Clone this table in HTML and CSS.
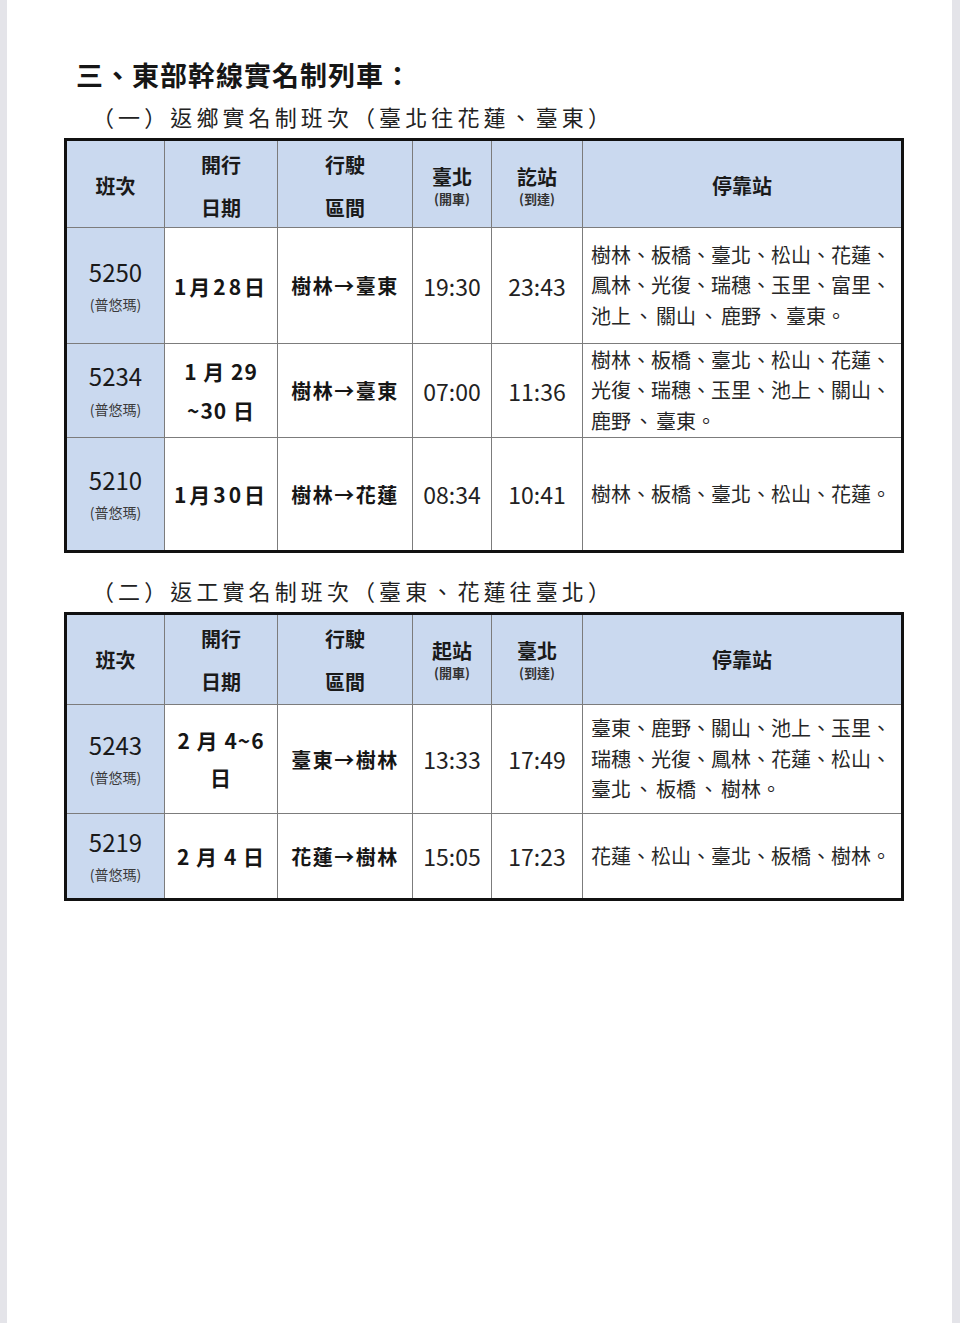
FILE: index.html
```html
<!DOCTYPE html>
<html lang="zh-Hant">
<head>
<meta charset="utf-8">
<title>東部幹線實名制列車</title>
<link rel="stylesheet" href="styles.css">
</head>
<body>
<div class="sheet">
  <h1 class="title">三、東部幹線實名制列車：</h1>

  <h2 class="subtitle">（一）返鄉實名制班次（臺北往花蓮、臺東）</h2>
  <div class="grid grid-a">
    <div class="cell head"><span class="hb">班次</span></div>
    <div class="cell head two"><span class="hb">開行</span><span class="hb">日期</span></div>
    <div class="cell head two"><span class="hb">行駛</span><span class="hb">區間</span></div>
    <div class="cell head stack"><span class="hb">臺北</span><span class="hs">(開車)</span></div>
    <div class="cell head stack"><span class="hb">訖站</span><span class="hs">(到達)</span></div>
    <div class="cell head last"><span class="hb">停靠站</span></div>

    <div class="cell train"><span class="no">5250</span><span class="kind">(普悠瑪)</span></div>
    <div class="cell date">1月28日</div>
    <div class="cell route">樹林→臺東</div>
    <div class="cell time">19:30</div>
    <div class="cell time">23:43</div>
    <div class="cell stops last"><p class="list">樹林、板橋、臺北、松山、花蓮、<br>鳳林、光復、瑞穗、玉里、富里、<br>池上<span class="ws">、</span>關山<span class="ws">、</span>鹿野<span class="ws">、</span>臺東。</p></div>

    <div class="cell train r2"><span class="no">5234</span><span class="kind">(普悠瑪)</span></div>
    <div class="cell date two-line">1 月 29<br>~30 日</div>
    <div class="cell route">樹林→臺東</div>
    <div class="cell time">07:00</div>
    <div class="cell time">11:36</div>
    <div class="cell stops last"><p class="list">樹林、板橋、臺北、松山、花蓮、<br>光復、瑞穗、玉里、池上、關山、<br>鹿野<span class="ws">、</span>臺東。</p></div>

    <div class="cell train bottom"><span class="no">5210</span><span class="kind">(普悠瑪)</span></div>
    <div class="cell date bottom">1月30日</div>
    <div class="cell route bottom">樹林→花蓮</div>
    <div class="cell time bottom">08:34</div>
    <div class="cell time bottom">10:41</div>
    <div class="cell stops last bottom"><p class="list">樹林、板橋、臺北、松山、花蓮。</p></div>
  </div>

  <h2 class="subtitle second">（二）返工實名制班次（臺東、花蓮往臺北）</h2>
  <div class="grid grid-b">
    <div class="cell head"><span class="hb">班次</span></div>
    <div class="cell head two"><span class="hb">開行</span><span class="hb">日期</span></div>
    <div class="cell head two"><span class="hb">行駛</span><span class="hb">區間</span></div>
    <div class="cell head stack"><span class="hb">起站</span><span class="hs">(開車)</span></div>
    <div class="cell head stack"><span class="hb">臺北</span><span class="hs">(到達)</span></div>
    <div class="cell head last"><span class="hb">停靠站</span></div>

    <div class="cell train"><span class="no">5243</span><span class="kind">(普悠瑪)</span></div>
    <div class="cell date two-line tight">2 月 4~6<br>日</div>
    <div class="cell route">臺東→樹林</div>
    <div class="cell time">13:33</div>
    <div class="cell time">17:49</div>
    <div class="cell stops last"><p class="list">臺東、鹿野、關山、池上、玉里、<br>瑞穗、光復、鳳林、花蓮、松山、<br>臺北<span class="ws">、</span>板橋<span class="ws">、</span>樹林。</p></div>

    <div class="cell train bottom"><span class="no">5219</span><span class="kind">(普悠瑪)</span></div>
    <div class="cell date bottom spaced">2 月 4 日</div>
    <div class="cell route bottom">花蓮→樹林</div>
    <div class="cell time bottom">15:05</div>
    <div class="cell time bottom">17:23</div>
    <div class="cell stops last bottom"><p class="list">花蓮、松山、臺北、板橋、樹林。</p></div>
  </div>
</div>
</body>
</html>
```
FILE: styles.css
```css
* { box-sizing: border-box; }
html, body { margin: 0; padding: 0; background: #ffffff; }
body {
  font-family: "Noto Sans CJK TC", "Noto Sans", sans-serif;
  color: #1c1c1c;
}
.sheet {
  width: 960px;
  min-height: 1323px;
  background: #ffffff;
  border-left: 7px solid #e4e4e9;
  border-right: 8px solid #e4e4e9;
  padding-top: 57px;
}
.title {
  margin: 0 0 0 69px;
  font-size: 27px;
  line-height: 36px;
  font-weight: 700;
  letter-spacing: 1px;
  color: #161616;
}
.subtitle {
  margin: 7px 0 0 85px;
  font-size: 22px;
  line-height: 32px;
  font-weight: 400;
  letter-spacing: 4.1px;
  color: #222;
}
.subtitle.second { margin-top: 21px; }
.grid {
  display: grid;
  width: 840px;
  margin: 6px 0 0 57px;
  border: 3px solid #111;
  grid-template-columns: 98px 113px 135px 79px 91px 318px;
}
.grid-a { grid-template-rows: 87px 116px 94px 112px; }
.grid-b { grid-template-rows: 90px 109px 84px; }
.cell {
  display: flex;
  flex-direction: column;
  align-items: center;
  justify-content: center;
  border-right: 1px solid #7c7c7c;
  border-bottom: 1px solid #7c7c7c;
  text-align: center;
}
.cell.last { border-right: none; }
.cell.bottom { border-bottom: none; }
.head { background: #cad9ef; }
.grid-a .head { padding-top: 4px; }
.grid-b .head { padding-top: 1px; }
.hb { font-size: 20px; font-weight: 700; color: #1a1a1a; line-height: 26px; }
.two .hb { line-height: 43px; }
.stack .hb { line-height: 26px; }
.hs { font-size: 13px; line-height: 18px; color: #333; font-weight: 700; }
.train { background: #cad9ef; }
.no { font-size: 24px; line-height: 36px; color: #1a1a1a; }
.kind { font-size: 14px; line-height: 28px; color: #3a3a3a; }
.train.r2 .kind { line-height: 30px; }
.date { font-size: 21px; font-weight: 700; letter-spacing: 3px; color: #161616; }
.date.two-line { line-height: 39px; letter-spacing: 1px; }
.date.tight { line-height: 37px; }
.date.spaced { letter-spacing: 1px; }
.route { font-size: 20px; font-weight: 700; letter-spacing: 1.5px; color: #161616; }
.time { font-size: 23px; color: #222; }
.stops {
  align-items: flex-start;
  text-align: left;
  padding-left: 8px;
}
.list {
  margin: 0;
  font-size: 20px;
  line-height: 30.5px;
  color: #262626;
}
.ws { margin: 0 2.5px; }
```
